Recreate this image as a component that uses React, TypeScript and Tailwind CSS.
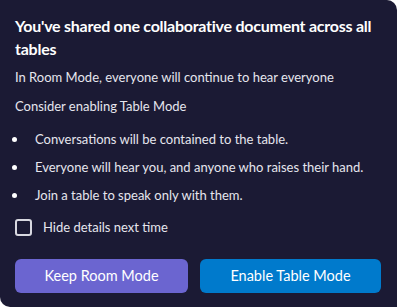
const bullets = [
  "Conversations will be contained to the table.",
  "Everyone will hear you, and anyone who raises their hand.",
  "Join a table to speak only with them.",
];

export default function App() {
  return (
    <div className="w-[397px] h-[307px] bg-white" style={{ fontFamily: "Lato, 'Liberation Sans', sans-serif" }}>
      <div className="w-full h-full bg-[#1b1a34] rounded-tr-[10px] rounded-bl-[10px] px-[15px] pt-[14px] text-white">
        <h1 className="text-[16px] leading-[23px] font-bold tracking-[-0.25px] text-white">
          You've shared one collaborative document across all tables
        </h1>
        <p className="mt-[8px] text-[13px] leading-[18px] text-[#e6e6ee]">
          In Room Mode, everyone will continue to hear everyone
        </p>
        <p className="mt-[11px] text-[13px] leading-[18px] text-[#e6e6ee]">Consider enabling Table Mode</p>
        <ul className="mt-[15px] flex flex-col gap-[10px]">
          {bullets.map((b) => (
            <li key={b} className="flex items-center text-[13px] leading-[18px] text-[#e6e6ee]">
              <span className="w-[5px] h-[5px] rounded-full bg-white -ml-[3px] mr-[18px]" />
              {b}
            </li>
          ))}
        </ul>
        <label className="mt-[14px] flex items-center gap-[11px] text-[13px] text-[#e6e6ee]">
          <span className="w-[17px] h-[17px] rounded-[3px] border-2 border-[#d8d8e0]" />
          Hide details next time
        </label>
        <div className="mt-[21px] flex gap-[12px]">
          <button className="w-[173px] h-[34px] rounded-[6px] bg-[#6b65d0] text-[14.5px] text-white">Keep Room Mode</button>
          <button className="w-[181px] h-[34px] rounded-[6px] bg-[#007acc] text-[14.5px] text-white">Enable Table Mode</button>
        </div>
      </div>
    </div>
  );
}
